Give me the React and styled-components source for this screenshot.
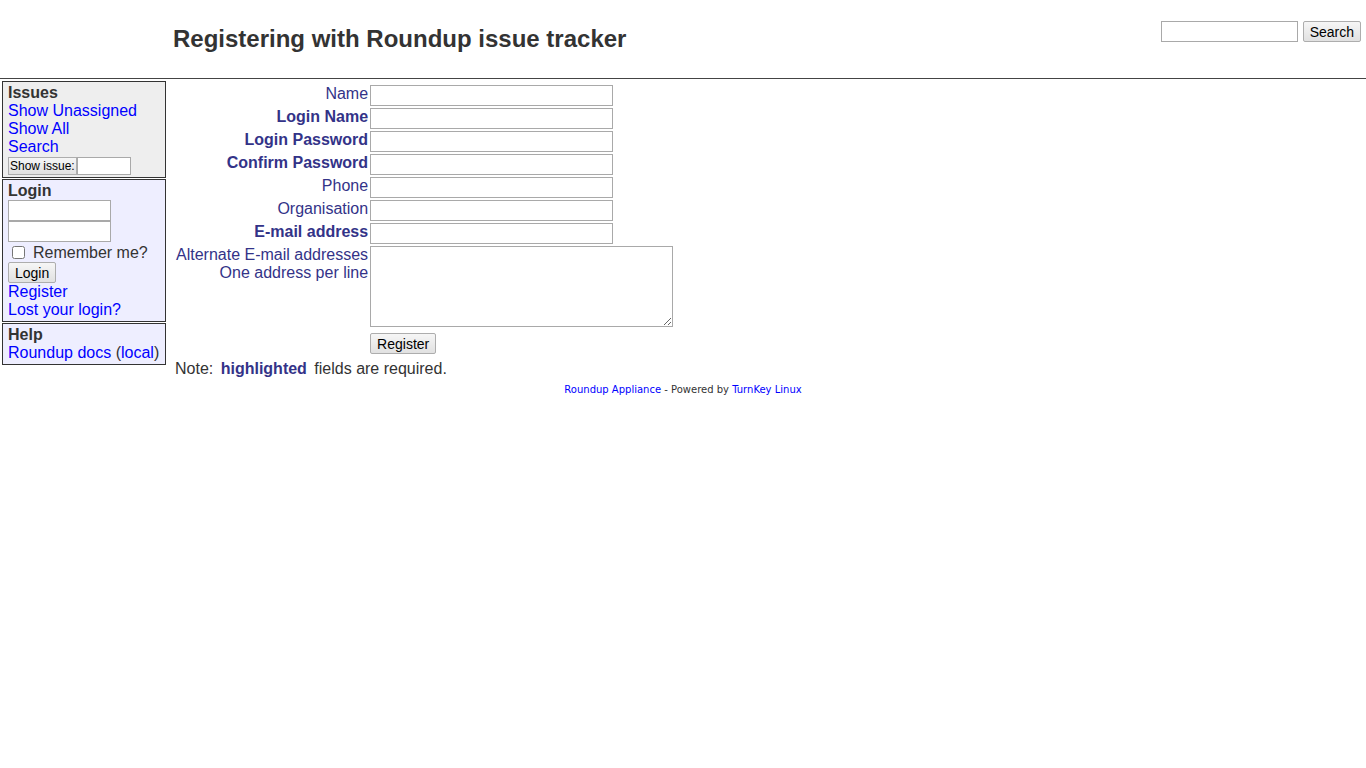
import React from "react";
import styled, { createGlobalStyle } from "styled-components";

const GlobalStyle = createGlobalStyle`
    body {
        margin: 0;
        font-family: "Liberation Sans", Arial, sans-serif;
        font-size: 16px;
        color: #333;
        background: #fff;
    }
    a {
        color: #00f;
        text-decoration: none;
    }
`;

function App() {
    return (
        <>
            <GlobalStyle />
            <Header>
                <Title>Registering with Roundup issue tracker</Title>
                <SearchForm>
                    <SearchInput type="text" />
                    <Button>Search</Button>
                </SearchForm>
            </Header>
            <Body>
                <Sidebar>
                    <Block>
                        <BlockTitle>Issues</BlockTitle>
                        <a href="#">Show Unassigned</a>
                        <a href="#">Show All</a>
                        <a href="#">Search</a>
                        <ShowIssue>
                            <SmallButton>Show issue:</SmallButton>
                            <SmallInput type="text" />
                        </ShowIssue>
                    </Block>
                    <Block user>
                        <BlockTitle>Login</BlockTitle>
                        <LoginInput type="text" />
                        <LoginInput type="password" />
                        <Remember>
                            <input type="checkbox" />
                            Remember me?
                        </Remember>
                        <LoginButton>Login</LoginButton>
                        <a href="#">Register</a>
                        <a href="#">Lost your login?</a>
                    </Block>
                    <Block user>
                        <BlockTitle>Help</BlockTitle>
                        <span>
                            <a href="#">Roundup docs</a> (<a href="#">local</a>)
                        </span>
                    </Block>
                </Sidebar>
                <Content>
                    <Form>
                        <Label>Name</Label>
                        <Field type="text" />
                        <Label required>Login Name</Label>
                        <Field type="text" />
                        <Label required>Login Password</Label>
                        <Field type="password" />
                        <Label required>Confirm Password</Label>
                        <Field type="password" />
                        <Label>Phone</Label>
                        <Field type="text" />
                        <Label>Organisation</Label>
                        <Field type="text" />
                        <Label required>E-mail address</Label>
                        <Field type="text" />
                        <Label>
                            Alternate E-mail addresses
                            <br />
                            One address per line
                        </Label>
                        <TextArea />
                        <span />
                        <RegisterRow>
                            <Button>Register</Button>
                        </RegisterRow>
                    </Form>
                    <Note>
                        Note: <Required>highlighted</Required> fields are required.
                    </Note>
                </Content>
            </Body>
            <Footer>
                <a href="#">Roundup Appliance</a> - Powered by{" "}
                <a href="#">TurnKey Linux</a>
            </Footer>
        </>
    );
}

export default App;

const Header = styled.div`
    display: flex;
    justify-content: space-between;
    align-items: flex-start;
    height: 78px;
    border-bottom: 1px solid #444;
    padding-left: 173px;
`;

const Title = styled.h1`
    margin: 0;
    padding-top: 25px;
    font-size: 24px;
    font-weight: bold;
    line-height: 28px;
    color: #333;
`;

const SearchForm = styled.form`
    display: flex;
    gap: 5px;
    margin-top: 21px;
    margin-right: 5px;
`;

const SearchInput = styled.input`
    width: 137px;
    height: 21px;
    box-sizing: border-box;
    border: 1px solid #a9a9a9;
    padding: 1px 2px;
    font: 13px "Liberation Sans", Arial, sans-serif;
`;

const Button = styled.button`
    height: 21px;
    box-sizing: border-box;
    padding: 0 6px;
    font: 14px "Liberation Sans", Arial, sans-serif;
    color: #000;
    border: 1px solid #adadad;
    border-radius: 2px;
    background: linear-gradient(#f6f6f6, #e1e1e1);
`;

const Body = styled.div`
    display: flex;
    align-items: flex-start;
    padding-top: 2px;
`;

const Sidebar = styled.div`
    display: flex;
    flex-direction: column;
    gap: 1px;
    width: 164px;
    margin-left: 2px;
`;

const Block = styled.div`
    display: flex;
    flex-direction: column;
    align-items: flex-start;
    border: 1px solid #333;
    background: ${(p) => (p.user ? "#eef" : "#eee")};
    padding: 2px 5px 2px 5px;
    line-height: 18px;
`;

const BlockTitle = styled.span`
    font-weight: bold;
`;

const ShowIssue = styled.div`
    display: flex;
    margin-top: 1px;
`;

const SmallButton = styled.button`
    height: 18px;
    box-sizing: border-box;
    padding: 0 1px;
    font: 12px "Liberation Sans", Arial, sans-serif;
    color: #000;
    border: 1px solid #adadad;
    background: linear-gradient(#f6f6f6, #e1e1e1);
`;

const SmallInput = styled.input`
    width: 54px;
    height: 18px;
    box-sizing: border-box;
    border: 1px solid #a9a9a9;
    padding: 0 2px;
`;

const LoginInput = styled.input`
    width: 103px;
    height: 21px;
    box-sizing: border-box;
    border: 1px solid #a9a9a9;
    padding: 1px 2px;
    margin: 0;
`;

const Remember = styled.label`
    display: flex;
    align-items: center;
    gap: 8px;
    height: 19px;
    margin-top: 1px;

    input {
        margin: 0 0 0 4px;
        width: 13px;
        height: 13px;
    }
`;

const LoginButton = styled(Button)`
    margin: 0 0 0;
`;

const Content = styled.div`
    margin-left: 10px;
    padding-top: 4px;
`;

const Form = styled.div`
    display: grid;
    grid-template-columns: auto auto;
    column-gap: 2px;
    row-gap: 2px;
    align-items: start;
    justify-content: start;
`;

const Label = styled.div`
    text-align: right;
    color: #338;
    font-weight: ${(p) => (p.required ? "bold" : "normal")};
    white-space: nowrap;
    line-height: 18px;
`;

const Field = styled.input`
    width: 243px;
    height: 21px;
    box-sizing: border-box;
    border: 1px solid #a9a9a9;
    padding: 1px 2px;
`;

const TextArea = styled.textarea`
    width: 303px;
    height: 81px;
    box-sizing: border-box;
    border: 1px solid #a9a9a9;
    margin: 0;
`;

const RegisterRow = styled.div`
    padding-top: 4px;
`;

const Note = styled.p`
    margin: 6px 0 0 -1px;
    line-height: 18px;
`;

const Required = styled.span`
    font-weight: bold;
    color: #338;
    margin: 0 3px;
`;

const Footer = styled.div`
    text-align: center;
    margin-top: 6px;
    font: 10px "DejaVu Sans", Verdana, sans-serif;
    color: #333;
`;
